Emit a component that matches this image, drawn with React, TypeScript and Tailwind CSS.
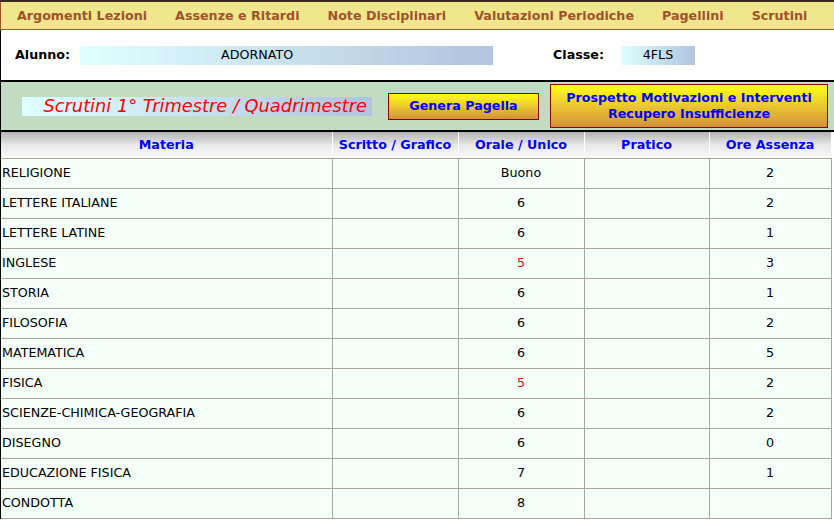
const NAV = [
  'Argomenti Lezioni',
  'Assenze e Ritardi',
  'Note Disciplinari',
  'Valutazioni Periodiche',
  'Pagellini',
  'Scrutini',
];

const ROWS: Array<{ materia: string; orale: string; assenze: string }> = [
  { materia: 'RELIGIONE', orale: 'Buono', assenze: '2' },
  { materia: 'LETTERE ITALIANE', orale: '6', assenze: '2' },
  { materia: 'LETTERE LATINE', orale: '6', assenze: '1' },
  { materia: 'INGLESE', orale: '5', assenze: '3' },
  { materia: 'STORIA', orale: '6', assenze: '1' },
  { materia: 'FILOSOFIA', orale: '6', assenze: '2' },
  { materia: 'MATEMATICA', orale: '6', assenze: '5' },
  { materia: 'FISICA', orale: '5', assenze: '2' },
  { materia: 'SCIENZE-CHIMICA-GEOGRAFIA', orale: '6', assenze: '2' },
  { materia: 'DISEGNO', orale: '6', assenze: '0' },
  { materia: 'EDUCAZIONE FISICA', orale: '7', assenze: '1' },
  { materia: 'CONDOTTA', orale: '8', assenze: '' },
];

const HEADERS = ['Materia', 'Scritto / Grafico', 'Orale / Unico', 'Pratico', 'Ore Assenza'];
const WIDTHS = ['w-[331px]', 'w-[126px]', 'w-[126px]', 'w-[125px]', 'w-[122px]'];

function isInsufficiente(v: string) {
  const n = parseInt(v, 10);
  return !isNaN(n) && n < 6;
}

export default function App() {
  return (
    <div className="w-[834px] h-[522px] overflow-hidden bg-white font-['Verdana','DejaVu_Sans',sans-serif] text-[12.7px] text-black">
      {/* Menu */}
      <div className="border-t-2 border-[#3b2a1e]">
        <div className="h-[28px] flex items-center gap-[28px] pl-[16px] bg-[#f0e68c] border-l border-b border-[#a0522d] font-bold text-[#a0522d] text-[12.7px]">
          {NAV.map((n) => (
            <span key={n}>{n}</span>
          ))}
        </div>
      </div>

      {/* Alunno / Classe */}
      <div className="h-[50px] flex items-center border-l border-black font-bold">
        <span className="ml-[14px] w-[65px]">Alunno:</span>
        <div className="w-[413px] h-[19px] flex items-center pl-[141px] font-normal bg-gradient-to-r from-[#e0ffff] to-[#b0c4de]">
          ADORNATO
        </div>
        <span className="ml-[60px] w-[68px]">Classe:</span>
        <div className="w-[74px] h-[19px] flex items-center justify-center font-normal bg-gradient-to-r from-[#e0ffff] to-[#b0c4de]">
          4FLS
        </div>
      </div>

      {/* Titolo e pulsanti */}
      <div className="h-[52px] flex items-center border-y-2 border-l border-black bg-[#c1dcc3]">
        <div className="ml-[21px] w-[350px] h-[19px] flex items-center justify-end pr-[5px] bg-gradient-to-r from-[#e0ffff] to-[#b0c4de] text-[#ff0000] italic text-[17.8px]">
          Scrutini 1° Trimestre / Quadrimestre
        </div>
        <button className="ml-[16px] w-[151px] h-[27px] border border-[#8b0000] bg-gradient-to-b from-[#ffff00] to-[#d2913a] text-[#0000ff] font-bold text-[12.7px]">
          Genera Pagella
        </button>
        <button className="ml-[11px] w-[278px] h-[44px] border border-[#8b0000] bg-gradient-to-b from-[#ffff00] to-[#d2913a] text-[#0000ff] font-bold text-[12.7px] leading-[16px]">
          Prospetto Motivazioni e Interventi
          <br />
          Recupero Insufficienze
        </button>
      </div>

      {/* Tabella */}
      <div className="border-l border-black">
        <table className="border-collapse w-[830px] table-fixed">
          <thead>
            <tr className="h-[26px] bg-gradient-to-b from-[#b4b4b4] via-[#e8e8e8] to-[#fafafa]">
              {HEADERS.map((h, i) => (
                <th
                  key={h}
                  className={`${WIDTHS[i]} p-0 border-r border-white border-b border-b-[#aca899] text-[#0000ff] font-bold text-[12.7px] text-center`}
                >
                  {h}
                </th>
              ))}
            </tr>
          </thead>
          <tbody className="bg-[#f5fffa]">
            {ROWS.map((r) => (
              <tr key={r.materia} className="h-[30px]">
                <td className="p-0 pl-[1px] border border-[#aca899] border-l-0">{r.materia}</td>
                <td className="p-0 border border-[#aca899]"></td>
                <td className={`p-0 border border-[#aca899] text-center ${isInsufficiente(r.orale) ? 'text-[#ff0000]' : ''}`}>
                  {r.orale}
                </td>
                <td className="p-0 border border-[#aca899]"></td>
                <td className="p-0 border border-[#aca899] text-center">{r.assenze}</td>
              </tr>
            ))}
          </tbody>
        </table>
      </div>
    </div>
  );
}
